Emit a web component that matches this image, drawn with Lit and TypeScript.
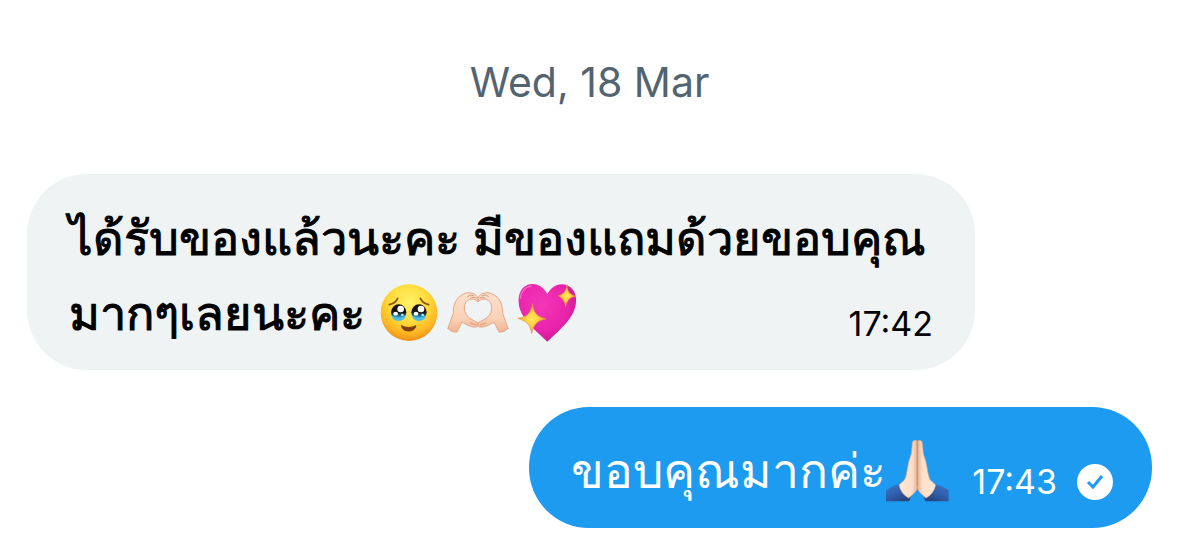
import { LitElement, html, css, svg } from "lit";
import { customElement } from "lit/decorators.js";

const face = html`<svg class="emoji face" viewBox="15 12 174 174" role="img" aria-label="Face holding back tears">
  <defs>
    <radialGradient id="skin" cx="0.5" cy="0.32" r="0.68">
      <stop offset="0" stop-color="#fff267" /><stop offset="0.5" stop-color="#ffdb3b" />
      <stop offset="0.82" stop-color="#fdb422" /><stop offset="1" stop-color="#ee8d16" />
    </radialGradient>
    <linearGradient id="eye" x1="0" y1="0" x2="0" y2="1">
      <stop offset="0.5" stop-color="#171310" /><stop offset="0.68" stop-color="#1c6488" /><stop offset="0.9" stop-color="#45c0ed" />
    </linearGradient>
  </defs>
  <circle cx="102" cy="98" r="85" fill="url(#skin)" />
  ${[71, 132].map((x) => svg`
    <ellipse cx=${x} cy="97" rx="23" ry="24" fill="url(#eye)" />
    <path d=${`M${x - 21} 106Q${x} 120 ${x + 21} 106Q${x + 18} 123 ${x} 123Q${x - 18} 123 ${x - 21} 106Z`} fill="#4cbbe5" />
    <circle cx=${x + 6} cy="87" r="10" fill="#fff" />
    <ellipse cx=${x - 9} cy="101" rx="7" ry="6" fill="#fff" />
    <circle cx=${x + 11} cy="105" r="4" fill="#b9e6f5" />`)}
  <path d="M43 74Q61 70 68 55M161 74Q143 70 136 55" fill="none" stroke="#8b4e10" stroke-width="5" stroke-linecap="round" />
  <path d="M79 137Q101 148 123 137Q119 153 101 153Q83 153 79 137Z" fill="#7e3d0e" stroke="#7e3d0e" stroke-width="3" stroke-linejoin="round" />
</svg>`;

const heartHands = html`<svg class="emoji hands" viewBox="9 12 186 174" role="img" aria-label="Heart hands">
  <defs>
    <linearGradient id="hand" x1="0" y1="0" x2="0" y2="1">
      <stop offset="0" stop-color="#fce0cb" /><stop offset="0.65" stop-color="#f9d2b7" /><stop offset="1" stop-color="#efb494" />
    </linearGradient>
  </defs>
  ${["", "translate(204 0) scale(-1 1)"].map((t) => svg`<g transform=${t} stroke-linejoin="round" stroke-linecap="round">
    <path d="M12 145L28 100C28 80 33 62 45 51C57 41 70 36 80 39C91 39 99 46 102 56L101 65C90 54 76 56 68 64C57 76 60 95 69 107C77 117 91 122 100 127Q106 137 98 141C82 143 67 134 54 126L39 156Q22 158 12 145Z" fill="url(#hand)" stroke="#e4a588" stroke-width="3" />
    <path d="M71 49Q80 41 90 47M80 54Q87 49 97 54M79 129L96 134" fill="none" stroke="#d9987c" stroke-width="3" />
  </g>`)}
</svg>`;

const sparkleHeart = html`<svg class="emoji heart" viewBox="15 12 180 174" role="img" aria-label="Sparkling heart">
  <defs>
    <radialGradient id="pink" cx="0.4" cy="0.35" r="0.7">
      <stop offset="0" stop-color="#f437b8" /><stop offset="0.65" stop-color="#e923ac" /><stop offset="1" stop-color="#c9188d" />
    </radialGradient>
    <radialGradient id="gold"><stop offset="0" stop-color="#ffe95a" /><stop offset="0.55" stop-color="#ffcc3c" /><stop offset="1" stop-color="#f09a35" /></radialGradient>
  </defs>
  <path d="M106 185C82 161 48 136 30 102C16 76 16 43 32 25C51 4 89 8 106 43C122 8 161 4 181 27C197 46 195 78 181 103C162 137 129 162 106 185Z" fill="url(#pink)" />
  <path d="M25 55Q28 23 57 18" fill="none" stroke="#ff91d5" stroke-width="5" stroke-linecap="round" opacity="0.6" />
  <path d="M62 71C65 99 73 108 102 117C75 122 67 131 59 160C54 134 47 125 18 115C46 111 55 101 62 71Z" fill="url(#gold)" stroke="#e98e48" stroke-width="2" />
  <path d="M165 14C166 35 171 42 191 49C172 52 166 60 161 80C157 61 151 54 138 47C155 43 161 35 165 14Z" fill="url(#gold)" stroke="#e98e48" stroke-width="2" />
</svg>`;

const prayer = html`<svg class="emoji pray" viewBox="12 12 186 186" role="img" aria-label="Folded hands">
  <defs>
    <linearGradient id="palm" x1="0" y1="0" x2="1" y2="0">
      <stop offset="0" stop-color="#ffe9d5" /><stop offset="0.72" stop-color="#fbdfc8" /><stop offset="1" stop-color="#e8b595" />
    </linearGradient>
    <linearGradient id="sleeve" x1="0" y1="0" x2="0.6" y2="1">
      <stop offset="0" stop-color="#3c79c8" /><stop offset="0.6" stop-color="#315fac" /><stop offset="1" stop-color="#26467e" />
    </linearGradient>
  </defs>
  ${["", "translate(212 0) scale(-1 1)"].map((t) => svg`<g transform=${t}>
    <path d="M12 162Q32 148 54 144Q62 170 86 184L82 196H12Z" fill="url(#sleeve)" />
    <path d="M106 16C101 10 91 13 91 23L88 54Q79 76 76 100Q73 121 68 131L51 147Q57 174 80 186L99 169Q106 162 106 149Z" fill="url(#palm)" stroke="#dca789" stroke-width="2" />
    <path d="M105 17V149" stroke="#c58a6c" stroke-width="2" />
  </g>`)}
</svg>`;

@customElement("app-root")
export class AppRoot extends LitElement {
  static styles = css`
    :host {
      display: block;
      background: #fff;
      font-family: Inter, "Liberation Sans", sans-serif;
    }
    main {
      display: flex;
      flex-direction: column;
      padding: 56px 27px 22px;
    }
    .date {
      align-self: center;
      margin-bottom: 66px;
      font-size: 41px;
      line-height: 52px;
      color: #536471;
    }
    .bubble {
      max-width: 948px;
      box-sizing: border-box;
      padding: 26px 42px 20px;
      border-radius: 60px;
      font-size: 47px;
      line-height: 75px;
    }
    .bubble p {
      display: flow-root;
      margin: 0;
    }
    .received {
      align-self: flex-start;
      margin-bottom: 37px;
      background: #eff3f4;
      color: #000;
    }
    .received .text {
      -webkit-text-stroke: 1px currentColor;
    }
    .sent {
      align-self: flex-end;
      background: #1d9bf0;
      color: #fff;
      padding-right: 39px;
      font-size: 48px;
    }
    .meta {
      float: right;
      display: flex;
      align-items: center;
      gap: 20px;
      height: 75px;
      padding-top: 22px;
      box-sizing: border-box;
      margin-left: 24px;
      font-size: 34px;
    }
    .emoji {
      height: 58px;
      vertical-align: -12px;
      overflow: visible;
    }
    .face {
      width: 58px;
      margin-left: 15px;
    }
    .hands {
      width: 62px;
      margin-left: 9px;
    }
    .heart {
      width: 60px;
      margin-left: 8px;
    }
    .pray {
      width: 62px;
      height: 62px;
      vertical-align: -14px;
    }
    .check {
      width: 36px;
      height: 36px;
    }
  `;

  render() {
    return html`<main>
      <time class="date">Wed, 18 Mar</time>
      <article class="bubble received">
        <p lang="th"><span class="text">ได้รับของแล้วนะคะ มีของแถมด้วยขอบคุณมากๆเลยนะคะ</span>${face}${heartHands}${sparkleHeart}<span class="meta"><time>17:42</time></span></p>
      </article>
      <article class="bubble sent">
        <p lang="th"><span class="text">ขอบคุณมากค่ะ</span>${prayer}<span class="meta"><time>17:43</time><svg class="check" viewBox="0 0 36 36" role="img" aria-label="Sent"><circle cx="18" cy="18" r="18" fill="#fff" /><path d="M11 18L16 23L25 12" fill="none" stroke="#1d9bf0" stroke-width="3" /></svg></span></p>
      </article>
    </main>`;
  }
}
